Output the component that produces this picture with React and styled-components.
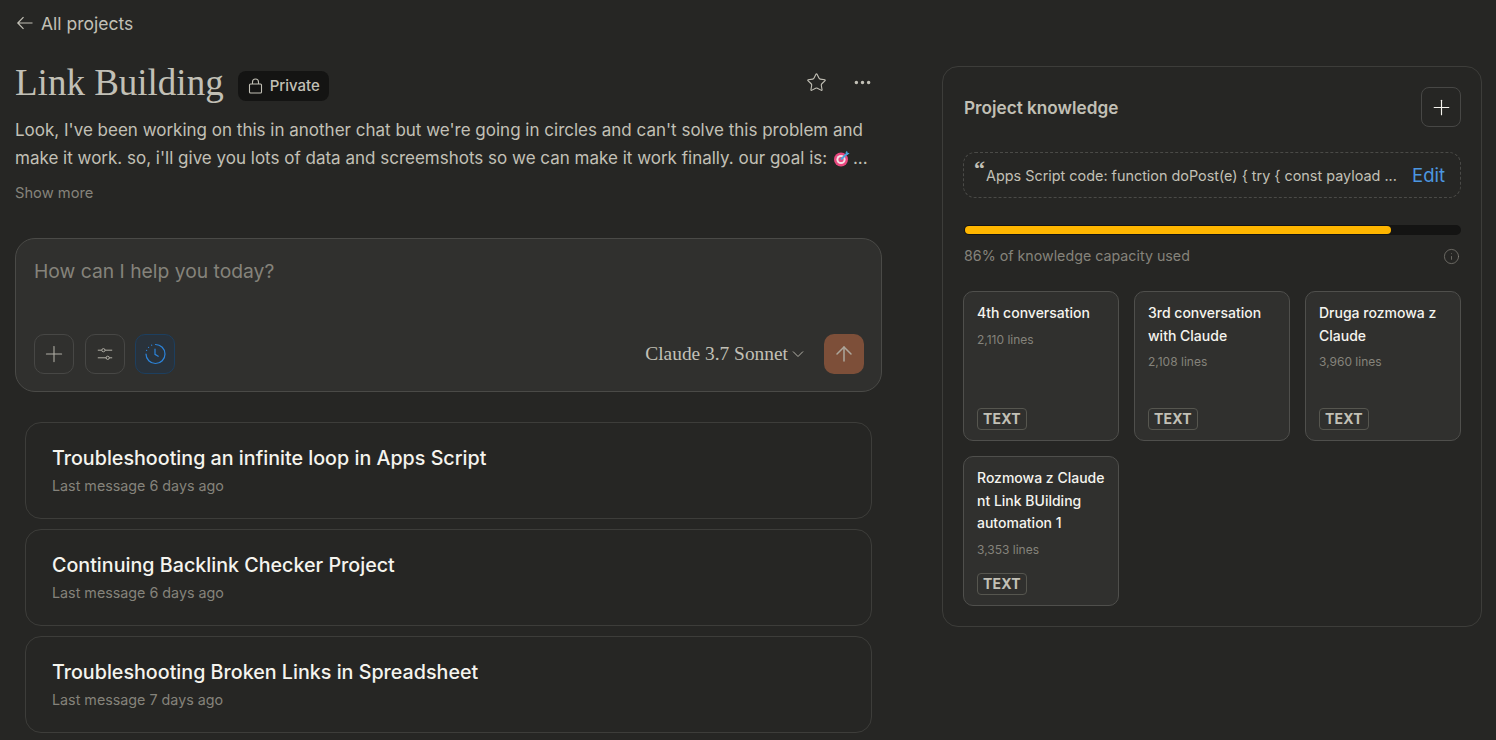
import React from "react";
import styled, { createGlobalStyle } from "styled-components";
import { ArrowUp, Ellipsis, Info, Plus, Star } from "lucide-react";

const GlobalStyle = createGlobalStyle`
  html, body {
    margin: 0;
    height: 100%;
    overflow: hidden;
    background: #262624;
  }
  * { box-sizing: border-box; }
`;

const sans = `Inter, "Liberation Sans", sans-serif`;
const serif = `"Liberation Serif", serif`;

const Page = styled.div`
  display: flex;
  align-items: flex-start;
  gap: 60px;
  height: 740px;
  overflow: hidden;
  padding: 0 14px 0 15px;
  font-family: ${sans};
  color: #c2c0b6;
`;

const Main = styled.main`
  flex: 0 0 867px;
  display: flex;
  flex-direction: column;
`;

const BackLink = styled.a`
  display: flex;
  align-items: center;
  gap: 7px;
  height: 48px;
  padding: 0 0 2px 1px;
  font-size: 17.5px;
  color: #c2c0b6;
`;

const TitleRow = styled.div`
  display: flex;
  align-items: center;
  height: 47px;
  margin-top: 11px;
  padding-right: 9px;
`;

const Title = styled.h1`
  margin: 0 14px 0 0;
  font-family: ${serif};
  font-size: 37px;
  font-weight: 400;
  color: #c2c0b6;
`;

const PrivateBadge = styled.span`
  display: flex;
  align-items: center;
  gap: 7px;
  height: 30px;
  margin-top: 6px;
  padding: 0 9px 0 10px;
  border-radius: 8px;
  background: #141413;
  font-size: 15px;
  font-weight: 500;
`;

const TitleActions = styled.div`
  display: flex;
  align-items: center;
  gap: 25px;
  margin-left: auto;
`;

const Description = styled.p`
  margin: 10px 0 0;
  font-size: 17px;
  line-height: 28px;
  color: #c2c0b6;
  white-space: nowrap;
`;

const Target = styled.svg`
  display: inline-block;
  vertical-align: -3px;
  margin: 0 3px 0 1px;
`;

const ShowMore = styled.div`
  margin-top: 11px;
  font-size: 14.7px;
  line-height: 20px;
  color: #85837b;
`;

const Composer = styled.div`
  display: flex;
  flex-direction: column;
  justify-content: space-between;
  height: 154px;
  margin-top: 35px;
  padding: 20px 17px 17px 18px;
  border: 1px solid #4a4a47;
  border-radius: 20px;
  background: #30302e;
`;

const Placeholder = styled.div`
  font-size: 19.3px;
  line-height: 24px;
  color: #85837b;
`;

const ComposerBar = styled.div`
  display: flex;
  align-items: center;
`;

const ToolButton = styled.button`
  display: flex;
  align-items: center;
  justify-content: center;
  width: 40px;
  height: 40px;
  margin-right: 10.5px;
  padding: 0;
  border: 1px solid ${(p) => (p.$active ? "#1d3f5f" : "#474745")};
  border-radius: 10px;
  background: ${(p) => (p.$active ? "#29323b" : "transparent")};
  color: ${(p) => (p.$active ? "#2c84db" : "#b0aea5")};
`;

const ModelPicker = styled.div`
  display: flex;
  align-items: center;
  gap: 4px;
  margin-left: auto;
  margin-right: 20px;
  font-family: ${serif};
  font-size: 19.4px;
  color: #c2c0b6;
`;

const SendButton = styled.button`
  display: flex;
  align-items: center;
  justify-content: center;
  width: 40px;
  height: 40px;
  padding: 0;
  border: 0;
  border-radius: 10px;
  background: #7d4f39;
  color: #ada79c;
`;

const ChatList = styled.div`
  display: flex;
  flex-direction: column;
  gap: 10px;
  margin: 30px 10px 0;
`;

const ChatCard = styled.div`
  height: 97px;
  padding: 21px 26px 0;
  border: 1px solid #3d3d3a;
  border-radius: 16px;
`;

const ChatTitle = styled.div`
  font-size: 19.7px;
  line-height: 28px;
  font-weight: 500;
  color: #f5f4ee;
`;

const ChatMeta = styled.div`
  margin-top: 4px;
  font-size: 14.3px;
  line-height: 20px;
  color: #85837b;
`;

const Knowledge = styled.aside`
  flex: 0 0 540px;
  margin-top: 66px;
  height: 561px;
  padding: 20px 20px 0 21px;
  border: 1px solid #3d3d3a;
  border-radius: 16px;
`;

const KnowledgeHead = styled.div`
  display: flex;
  align-items: center;
  justify-content: space-between;
  height: 40px;
`;

const KnowledgeTitle = styled.h2`
  margin: 0;
  padding-top: 1px;
  font-size: 17.2px;
  font-weight: 600;
  color: #c2c0b6;
`;

const AddButton = styled.button`
  display: flex;
  align-items: center;
  justify-content: center;
  width: 40px;
  height: 40px;
  padding: 0;
  border: 1px solid #474745;
  border-radius: 8px;
  background: transparent;
  color: #f5f4ee;
`;

const Instructions = styled.div`
  position: relative;
  display: flex;
  align-items: center;
  justify-content: space-between;
  height: 46px;
  margin: 25px 0 0 -1px;
  padding: 0 15px 0 22px;
  border: 1px dashed #4a4a47;
  border-radius: 12px;
  font-size: 14.4px;
`;

const QuoteMark = styled.span`
  position: absolute;
  left: 10px;
  top: 5px;
  font-family: ${serif};
  font-size: 22px;
  line-height: 22px;
  font-weight: 700;
`;

const EditLink = styled.a`
  font-size: 18.5px;
  color: #4c97e0;
`;

const Capacity = styled.div`
  height: 10px;
  margin-top: 27px;
  padding: 1px;
  border-radius: 5px;
  background: #141413;
`;

const CapacityFill = styled.div`
  height: 8px;
  border-radius: 4px;
  background: #ffb600;
`;

const CapacityRow = styled.div`
  display: flex;
  align-items: center;
  justify-content: space-between;
  margin-top: 11px;
  padding-right: 1px;
  font-size: 14.25px;
  line-height: 20px;
  color: #85837b;
`;

const Files = styled.div`
  display: grid;
  grid-template-columns: repeat(3, 156px);
  gap: 15px;
  margin: 25px 0 0 -1px;
`;

const FileCard = styled.div`
  display: flex;
  flex-direction: column;
  height: 150px;
  padding: 10px 10px 10px 13px;
  border: 1px solid #4f4f4c;
  border-radius: 10px;
  background: #30302e;
`;

const FileName = styled.div`
  font-size: 14px;
  line-height: 22.5px;
  font-weight: 500;
  color: #f5f4ee;
`;

const FileLines = styled.div`
  margin-top: 7px;
  font-size: 12px;
  line-height: 16px;
  color: #85837b;
`;

const FileType = styled.span`
  align-self: flex-start;
  margin-top: auto;
  padding: 0 5px;
  height: 22px;
  border: 1px solid #56564f;
  border-radius: 4px;
  font-size: 14px;
  letter-spacing: 0.2px;
  line-height: 20px;
  font-weight: 700;
  color: #c2c0b6;
`;

const BackArrow = () => (
  <svg width="18" height="18" viewBox="0 0 18 18" fill="none" stroke="currentColor" strokeWidth="1.2">
    <path d="M16.5 9H1.8M7.5 3.2 1.8 9l5.7 5.8" />
  </svg>
);

const LockIcon = () => (
  <svg width="15" height="16" viewBox="0 0 15 16" fill="none" stroke="currentColor" strokeWidth="1.1">
    <rect x="1.5" y="6" width="12" height="9" rx="1" />
    <path d="M4.5 6V4a3 3 0 0 1 6 0v2" />
  </svg>
);

const Chevron = () => (
  <svg width="12" height="12" viewBox="0 0 12 12" fill="none" stroke="currentColor" strokeWidth="0.9">
    <path d="M1 3.5 6 8.5 11 3.5" />
  </svg>
);

const TargetEmoji = () => (
  <Target width="17" height="17" viewBox="0 0 17 17">
    <circle cx="8" cy="9.5" r="7" fill="#e8487f" />
    <circle cx="8" cy="9.5" r="4.6" fill="#f4dfe4" />
    <circle cx="8" cy="9.5" r="2.6" fill="#e8487f" />
    <path d="M8 9.5 14 3.5" stroke="#4ba3dc" strokeWidth="2" />
    <path d="M12.5 2.5 14 .8 14.6 2.8 16.6 3.2 14.4 5z" fill="#4ba3dc" />
  </Target>
);

const SlidersIcon = () => (
  <svg width="16" height="16" viewBox="0 0 16 16" fill="none" stroke="currentColor" strokeWidth="1">
    <path d="M.8 4.2h4M8 4.2h7.2M.8 11.8h8.4M12.2 11.8h3" />
    <circle cx="6.4" cy="4.2" r="1.6" />
    <circle cx="10.7" cy="11.8" r="1.6" />
  </svg>
);

const ClockIcon = () => (
  <svg width="22" height="22" viewBox="0 0 22 22" fill="none" stroke="currentColor" strokeWidth="1.2" strokeLinecap="round">
    <path d="M11.5 1.5A9.5 9.5 0 1 1 2 11" />
    <path d="M7.6 2.2 7.7 2.2M4.5 4.4 4.6 4.3M2.6 7.4 2.6 7.4" />
    <path d="M11 6v5.3l3.2 2" />
  </svg>
);

const chats = [
  { title: "Troubleshooting an infinite loop in Apps Script", meta: "Last message 6 days ago" },
  { title: "Continuing Backlink Checker Project", meta: "Last message 6 days ago" },
  { title: "Troubleshooting Broken Links in Spreadsheet", meta: "Last message 7 days ago" },
];

const files = [
  { name: "4th conversation", lines: "2,110 lines" },
  { name: "3rd conversation with Claude", lines: "2,108 lines" },
  { name: "Druga rozmowa z Claude", lines: "3,960 lines" },
  { name: "Rozmowa z Claude nt Link BUilding automation 1", lines: "3,353 lines" },
];

const App = () => {
  return (
    <Page>
      <GlobalStyle />
      <Main>
        <BackLink>
          <BackArrow />
          All projects
        </BackLink>
        <TitleRow>
          <Title>Link Building</Title>
          <PrivateBadge>
            <LockIcon />
            Private
          </PrivateBadge>
          <TitleActions>
            <Star size={21} strokeWidth={1.25} />
            <Ellipsis size={21} strokeWidth={2} />
          </TitleActions>
        </TitleRow>
        <Description>
          Look, I've been working on this in another chat but we're going in circles and can't solve this problem and
          <br />
          make it work. so, i'll give you lots of data and screemshots so we can make it work finally. our goal is: <TargetEmoji />...
        </Description>
        <ShowMore>Show more</ShowMore>
        <Composer>
          <Placeholder>How can I help you today?</Placeholder>
          <ComposerBar>
            <ToolButton><Plus size={26} strokeWidth={1} /></ToolButton>
            <ToolButton><SlidersIcon /></ToolButton>
            <ToolButton $active><ClockIcon /></ToolButton>
            <ModelPicker>
              Claude 3.7 Sonnet
              <Chevron />
            </ModelPicker>
            <SendButton><ArrowUp size={24} strokeWidth={1.5} /></SendButton>
          </ComposerBar>
        </Composer>
        <ChatList>
          {chats.map((chat) => (
            <ChatCard key={chat.title}>
              <ChatTitle>{chat.title}</ChatTitle>
              <ChatMeta>{chat.meta}</ChatMeta>
            </ChatCard>
          ))}
        </ChatList>
      </Main>
      <Knowledge>
        <KnowledgeHead>
          <KnowledgeTitle>Project knowledge</KnowledgeTitle>
          <AddButton><Plus size={25} strokeWidth={1.1} /></AddButton>
        </KnowledgeHead>
        <Instructions>
          <QuoteMark>“</QuoteMark>
          <span>Apps Script code: function doPost(e) {"{"} try {"{"} const payload ...</span>
          <EditLink>Edit</EditLink>
        </Instructions>
        <Capacity>
          <CapacityFill style={{ width: "86%" }} />
        </Capacity>
        <CapacityRow>
          86% of knowledge capacity used
          <Info size={17} strokeWidth={1} />
        </CapacityRow>
        <Files>
          {files.map((file) => (
            <FileCard key={file.name}>
              <FileName>{file.name}</FileName>
              <FileLines>{file.lines}</FileLines>
              <FileType>TEXT</FileType>
            </FileCard>
          ))}
        </Files>
      </Knowledge>
    </Page>
  );
};

export default App;
